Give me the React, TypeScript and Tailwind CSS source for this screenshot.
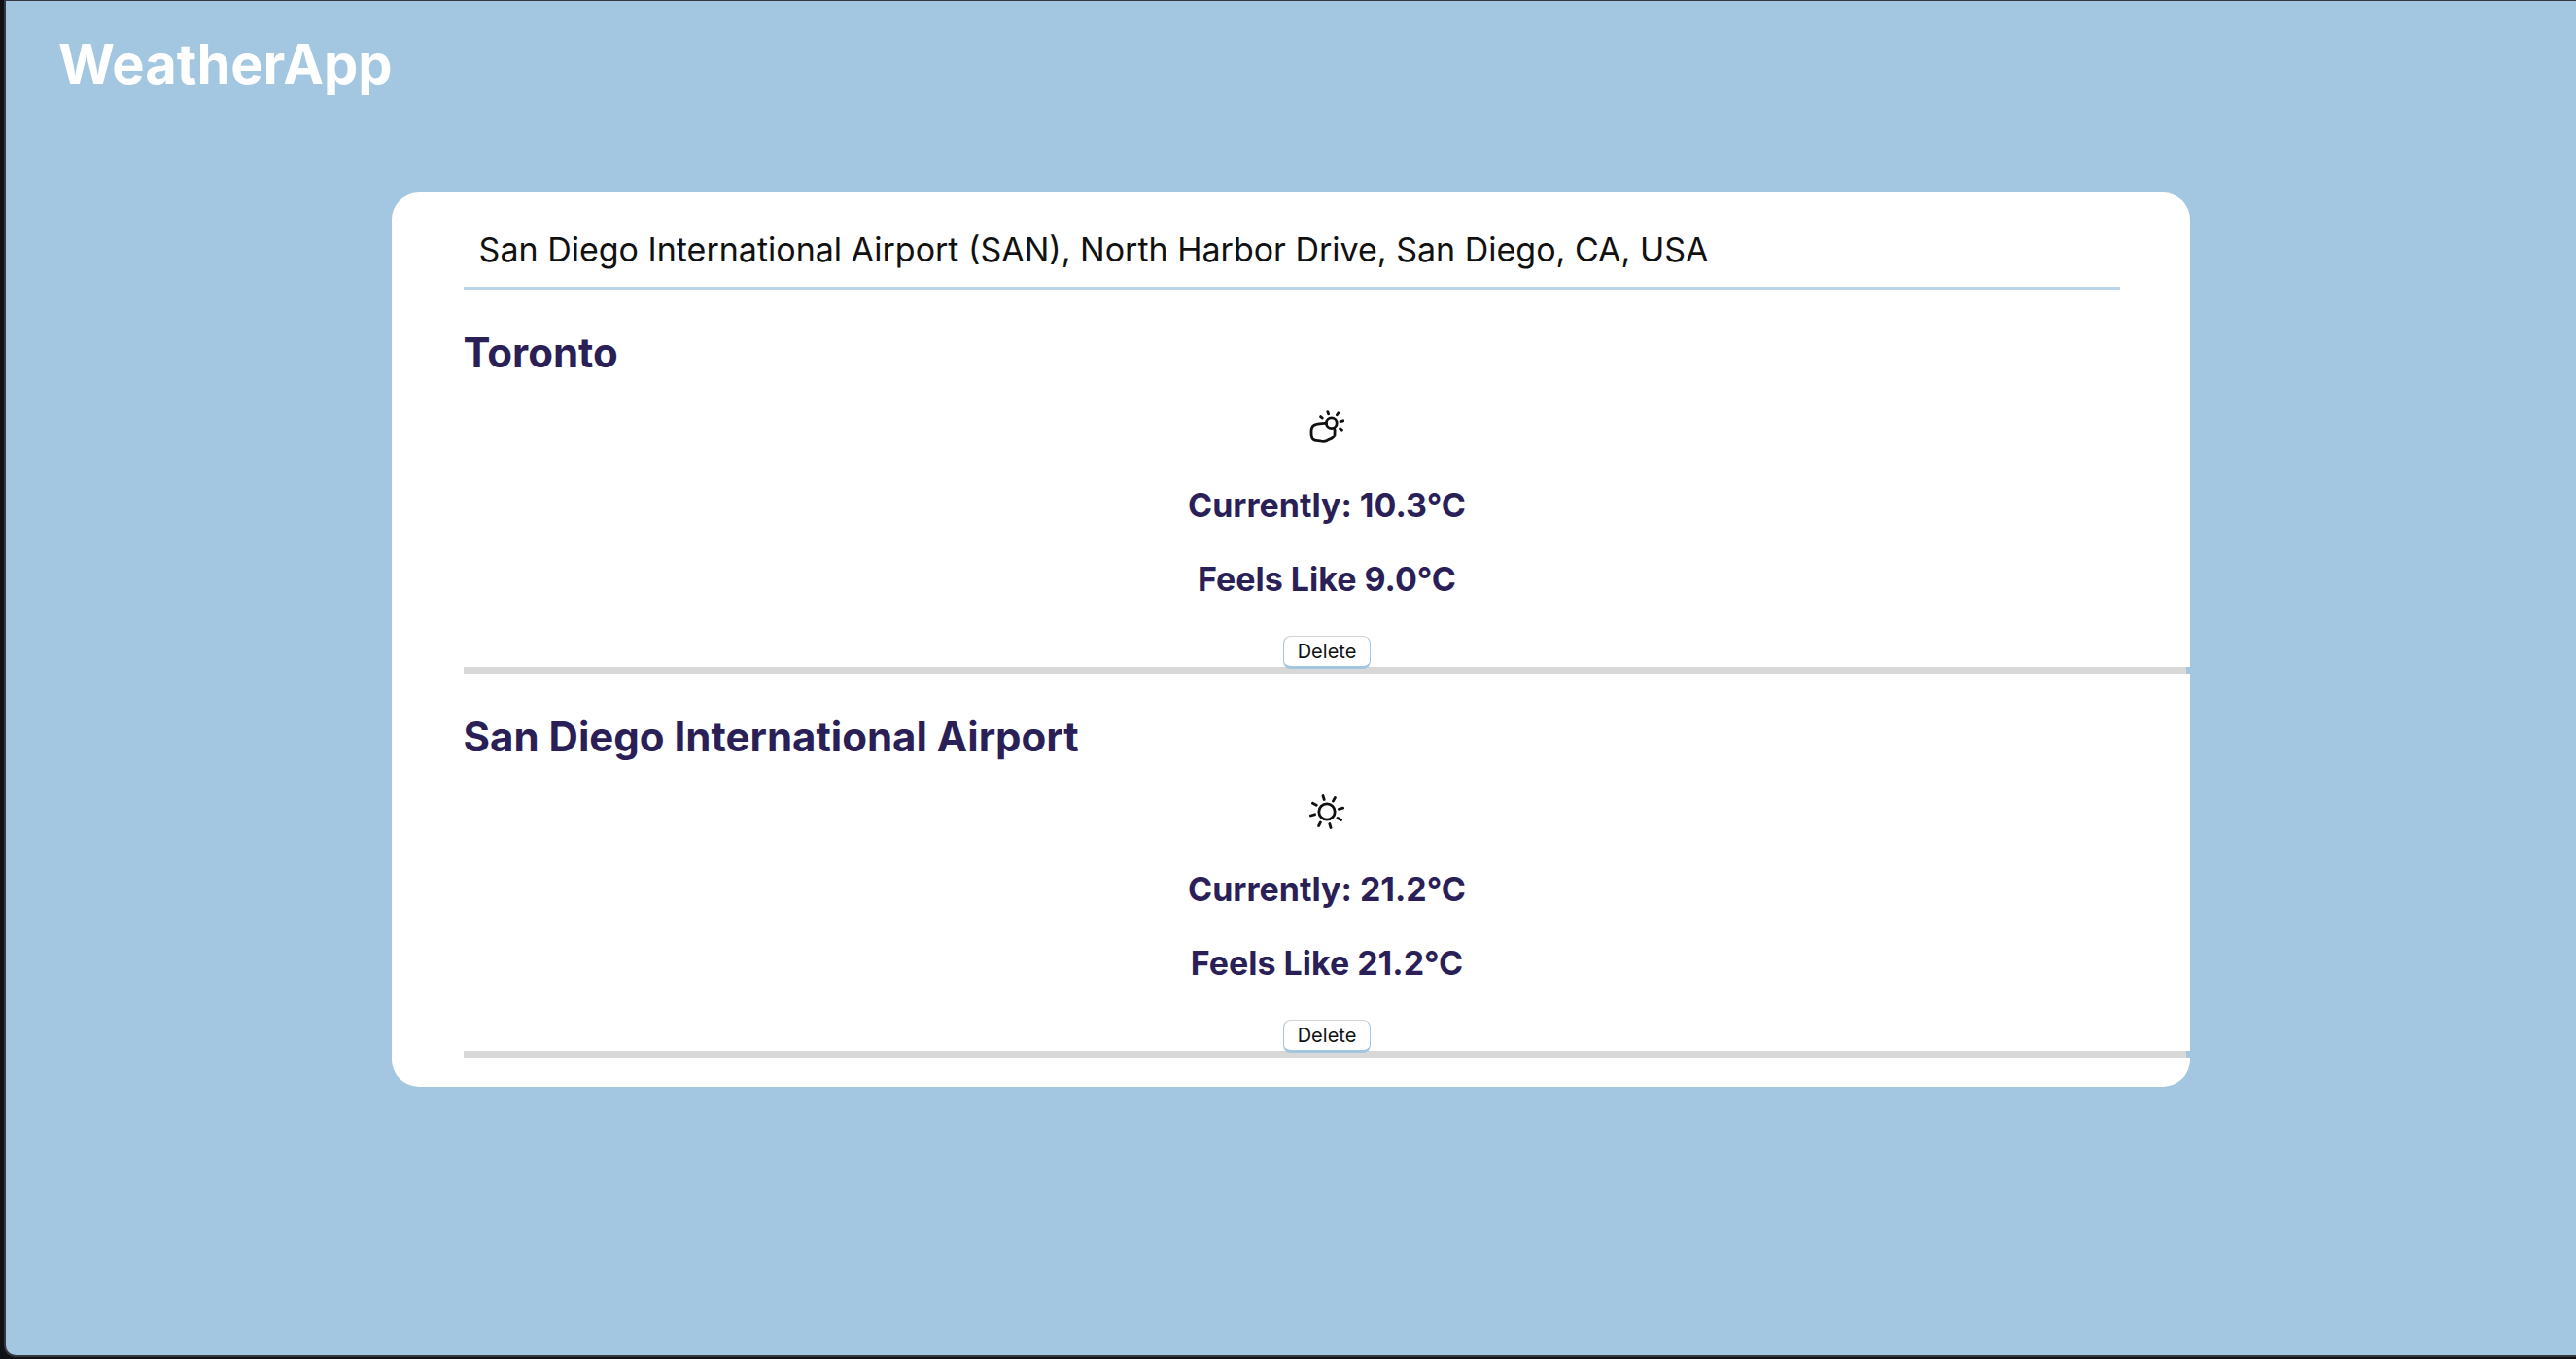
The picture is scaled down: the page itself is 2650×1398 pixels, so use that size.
import React, { useState } from "react";

type Condition = "sunny" | "partly-cloudy";

interface Place {
  name: string;
  condition: Condition;
  current: string;
  feelsLike: string;
}

const initialPlaces: Place[] = [
  { name: "Toronto", condition: "partly-cloudy", current: "10.3", feelsLike: "9.0" },
  { name: "San Diego International Airport", condition: "sunny", current: "21.2", feelsLike: "21.2" },
];

function SunIcon() {
  return (
    <svg viewBox="0 0 36 36" className="size-9" fill="none" stroke="currentColor" strokeWidth="2.8" strokeLinecap="round" aria-label="Sunny" role="img">
      <circle cx="18" cy="18" r="8.2" />
      <path d="M14 1.5l1.2 4M26.4 3.5l-2 3.6M34.6 14.2l-4.2 1.2M32.6 26.5l-3.6-2M22 34.5l-1.2-4M9.6 32.5l1.8-3.6M1.4 22l4.2-1.2M3.4 9.3l3.8 2" />
    </svg>
  );
}

function PartlyCloudyIcon() {
  return (
    <svg viewBox="0 0 36 36" className="size-9" fill="none" stroke="currentColor" strokeWidth="2.8" strokeLinecap="round" strokeLinejoin="round" aria-label="Partly cloudy" role="img">
      <circle cx="22.8" cy="13.2" r="5.4" />
      <path d="M17.5 13.6C14 12.8 11 14 7.4 14.4C3.4 15.2 1.8 18.4 2 22.4C2 25 2 28 3.6 30C5.6 32 8.4 31.4 11 31.8C14.4 33 17.4 32.4 20 30.4C23 29.4 25.4 28.2 26 25.6C25.6 23.2 27 20.6 25.4 18.4" />
      <path d="M11.6 6.6l1.6 1.4M18.8 1.6l.8 2.2M29.8 2.8l-1.4 2M34.8 10.8l-2.8 .8M33.4 20.2l-1.8-1.4" />
    </svg>
  );
}

function PlaceItem({ place, onDelete }: { place: Place; onDelete: () => void }) {
  return (
    <li className="flex flex-col items-center pt-[41px] text-[#2a1f56]">
      <h2 className="self-start text-[42px] leading-12 font-bold">{place.name}</h2>
      <div className="mt-[35px] text-[#111]">
        {place.condition === "sunny" ? <SunIcon /> : <PartlyCloudyIcon />}
      </div>
      <p className="mt-[42px] text-[34px] leading-10 font-bold">Currently: {place.current}°C</p>
      <p className="mt-9 text-[34px] leading-10 font-bold">Feels Like {place.feelsLike}°C</p>
      <button
        type="button"
        onClick={onDelete}
        className="relative mt-[38px] h-[34px] rounded-[8px] border border-b-3 border-[#a3c7e1] border-t-[#d3d3d3] bg-white px-[14px] text-[20px] leading-7 text-[#111]"
      >
        Delete
      </button>
      <div className="-mt-[2px] h-[7px] w-full border-r-4 border-[#a3c7e1] bg-[#d8d8d8]" />
    </li>
  );
}

export default function App() {
  const [query, setQuery] = useState("San Diego International Airport (SAN), North Harbor Drive, San Diego, CA, USA");
  const [places, setPlaces] = useState(initialPlaces);

  return (
    <div className="flex min-h-screen flex-col bg-[#0e1116] pb-[2px] pl-1 font-['Inter','Liberation_Sans',sans-serif]">
      <div className="flex-1 rounded-bl-[12px] border-t border-b-2 border-l-2 border-[#33383e] bg-[#a3c7e1]">
        <header className="px-[54px] pt-[33px]">
          <h1 className="text-[56px] leading-16 font-bold text-white">WeatherApp</h1>
        </header>
        <main className="mx-auto mt-[100px] w-[70%] rounded-[28px] bg-white pt-5 pb-[30px] pl-[74px]">
          <div className="pr-[72px]">
            <input
              type="text"
              aria-label="Location"
              value={query}
              onChange={(e) => setQuery(e.target.value)}
              className="block h-20 w-full border-b-3 border-[#b9d5e9] px-4 text-[34px] text-[#111] outline-none"
            />
          </div>
          <ul>
            {places.map((place) => (
              <PlaceItem
                key={place.name}
                place={place}
                onDelete={() => setPlaces(places.filter((p) => p.name !== place.name))}
              />
            ))}
          </ul>
        </main>
      </div>
    </div>
  );
}
